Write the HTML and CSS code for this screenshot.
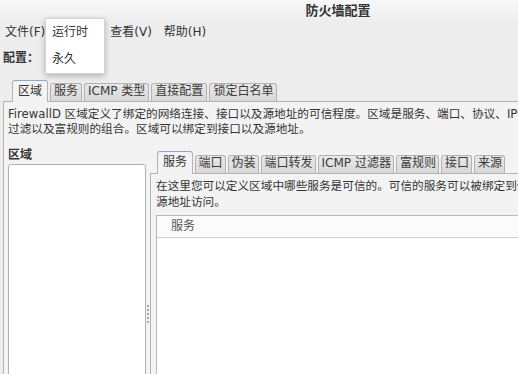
FILE: index.html
```
<!DOCTYPE html>
<html lang="zh-CN">
<head>
    <meta charset="UTF-8">
    <title>防火墙配置</title>
    <link rel="stylesheet" href="styles.css">
</head>
<body>
<div class="window">
    <div class="titlebar">防火墙配置</div>

    <div class="menubar">
        <span>文件(F)</span>
        <span class="after-popup">查看(V)</span>
        <span>帮助(H)</span>
    </div>

    <div class="config-row">配置：</div>

    <div class="popup">
        <div class="popup-item">运行时</div>
        <div class="popup-item">永久</div>
    </div>

    <div class="notebook main">
        <div class="tabs">
            <div class="tab active">区域</div>
            <div class="tab">服务</div>
            <div class="tab">ICMP 类型</div>
            <div class="tab">直接配置</div>
            <div class="tab">锁定白名单</div>
        </div>
        <div class="panel">
            <p class="desc">FirewallD 区域定义了绑定的网络连接、接口以及源地址的可信程度。区域是服务、端口、协议、IP伪装、端口/报文转发、ICMP<br>过滤以及富规则的组合。区域可以绑定到接口以及源地址。</p>

            <div class="paned">
                <div class="zone-col">
                    <div class="zone-label">区域</div>
                    <div class="listbox"></div>
                </div>
                <div class="handle"><div class="grip"></div></div>

                <div class="notebook inner">
                    <div class="tabs">
                        <div class="tab active">服务</div>
                        <div class="tab">端口</div>
                        <div class="tab">伪装</div>
                        <div class="tab">端口转发</div>
                        <div class="tab">ICMP 过滤器</div>
                        <div class="tab">富规则</div>
                        <div class="tab">接口</div>
                        <div class="tab">来源</div>
                    </div>
                    <div class="panel">
                        <p class="hint">在这里您可以定义区域中哪些服务是可信的。可信的服务可以被绑定到任何连接、接口以及<br>源地址访问。</p>
                        <div class="tree">
                            <div class="tree-head">服务</div>
                        </div>
                    </div>
                </div>
            </div>
        </div>
    </div>
</div>
</body>
</html>
```

FILE: styles.css
```
body {
    margin: 0;
    background-color: #ededed;
    font-family: "DejaVu Sans", "Noto Sans CJK SC", sans-serif;
    font-size: 12px;
    color: #333;
    overflow: hidden;
}

.window {
    position: relative;
    width: 676px;
}

.titlebar {
    height: 22px;
    line-height: 22px;
    text-align: center;
    font-size: 13px;
    font-weight: bold;
    background: linear-gradient(#f8f8f8, #eeeeee);
}

.menubar {
    display: flex;
    height: 20px;
    line-height: 20px;
}

.menubar span {
    padding: 0 6px;
}

.menubar span:first-child {
    padding-left: 5px;
}

/* the options menu sits under the open dropdown */
.menubar .after-popup {
    margin-left: 53px;
}

.config-row {
    height: 32px;
    line-height: 32px;
    padding-left: 3px;
    font-weight: bold;
}

/* dropdown of the config combobox */
.popup {
    position: absolute;
    left: 45px;
    top: 18px;
    width: 58px;
    background-color: #fff;
    border: 1px solid #d4d4d4;
    box-shadow: 0 2px 6px rgba(0, 0, 0, 0.25);
    z-index: 5;
}

.popup-item {
    height: 27px;
    line-height: 27px;
    padding-left: 6px;
}

/* notebooks */
.tabs {
    display: flex;
    align-items: flex-end;
    gap: 2px;
}

.tab {
    box-sizing: border-box;
    height: 18px;
    line-height: 15px;
    padding: 0 3px;
    border: 1px solid #b2b2b2;
    border-bottom: none;
    border-radius: 3px 3px 0 0;
    background: linear-gradient(#e8e8e8, #d8d8d8);
    color: #3a3a3a;
    white-space: nowrap;
}

.tab.active {
    position: relative;
    z-index: 1;
    height: 22px;
    line-height: 20px;
    padding: 0 5px;
    margin-bottom: -1px;
    border-top-color: #86a9cd;
    background: #f3f3f3;
    color: #333;
}

.panel {
    border: 1px solid #b4b4b4;
    background-color: #f3f3f3;
}

.notebook.main {
    margin: 6px 3px 0;
}

.notebook.main > .tabs {
    padding-left: 9px;
}

.notebook.main > .panel {
    padding: 5px 0 0 4px;
}

.desc {
    margin: 0;
    font-size: 11.65px;
    line-height: 15px;
    white-space: nowrap;
}

.paned {
    display: flex;
    height: 334px;
    margin-top: 10px;
}

.zone-col {
    display: flex;
    flex-direction: column;
    width: 138px;
}

.zone-label {
    line-height: 16px;
    margin-bottom: 1px;
    font-weight: bold;
}

.listbox {
    flex: 1;
    background-color: #fff;
    border: 1px solid #b0b0b0;
    border-radius: 3px 3px 0 0;
}

.handle {
    display: flex;
    align-items: center;
    justify-content: center;
    width: 4px;
}

.grip {
    width: 2px;
    height: 18px;
    background: repeating-linear-gradient(#a8a8a8 0 2px, transparent 2px 4px);
}

.notebook.inner {
    flex: 1;
    margin-top: 4px;
}

.notebook.inner > .tabs {
    padding-left: 7px;
}

.notebook.inner .tab {
    padding: 0 2.5px;
}

.notebook.inner .tab.active {
    height: 23px;
    line-height: 21px;
    padding: 0 5px;
}

.notebook.inner > .panel {
    height: 100%;
    padding: 4px 0 0 5px;
}

.hint {
    margin: 0;
    font-size: 11.65px;
    line-height: 16px;
    white-space: nowrap;
}

.tree {
    height: 200px;
    margin-top: 5px;
    background-color: #fff;
    border: 1px solid #b8b8b8;
}

.tree-head {
    height: 21px;
    line-height: 21px;
    padding-left: 14px;
    color: #555;
    background-color: #fbfbfb;
    border-bottom: 1px solid #d2d2d2;
}
```
